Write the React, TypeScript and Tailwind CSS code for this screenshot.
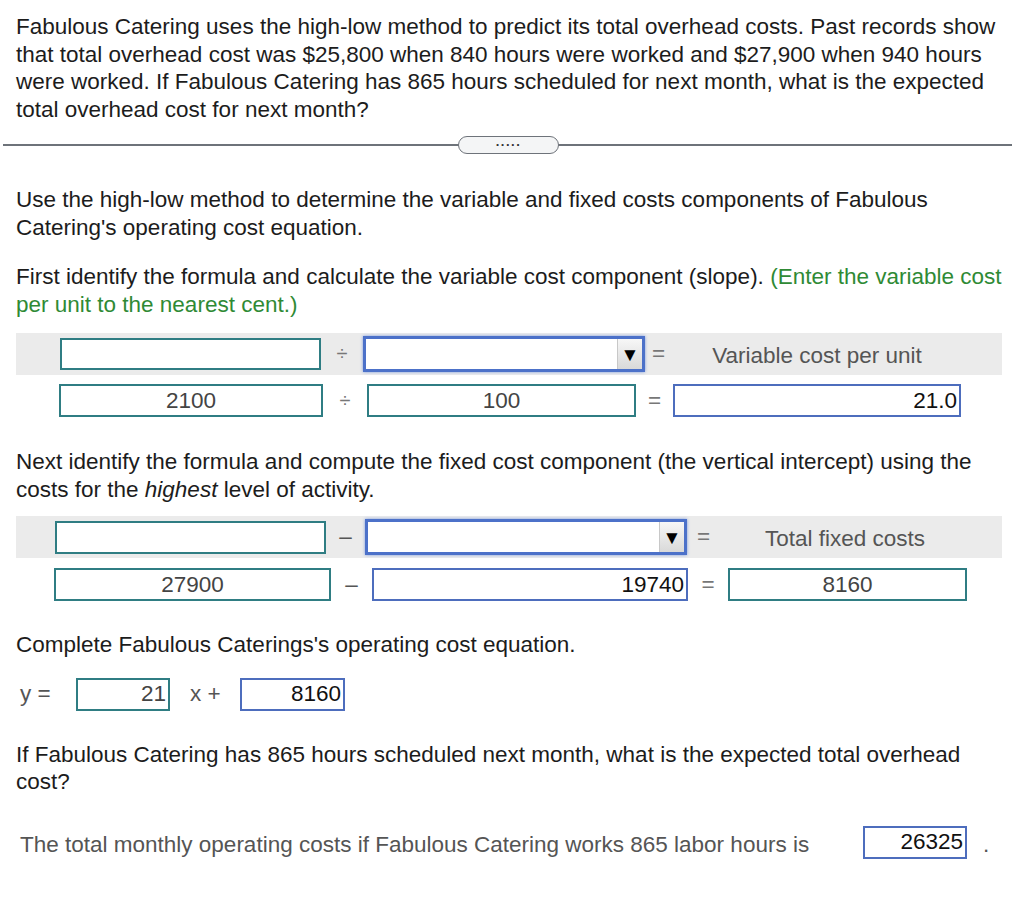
import React from "react";

const teal = "border-2 border-[#2f7d83]";
const blue = "border-2 border-[#4d6dbd]";

function Select({ w }: { w: string }) {
  return (
    <div className={`${w} h-[36px] flex border-[3px] border-[#4c71c9] shadow-[0_0_3px_#7d9be0] bg-white`}>
      <div className="flex-1" />
      <div className="w-[25px] flex items-center justify-center bg-gradient-to-b from-[#f7f7f7] to-[#d9d9d9] border-l border-[#c8c8c8] text-[19px] leading-none text-black">
        ▼
      </div>
    </div>
  );
}

export default function App() {
  return (
    <div
      className="w-[1024px] h-[907px] bg-white text-[#1c1c1c] text-[22.5px] leading-[27.5px] flex flex-col"
      style={{ fontFamily: '"Liberation Sans", Arial, sans-serif' }}
    >
      <p className="px-4 pt-[13px]">
        Fabulous Catering uses the high-low method to predict its total overhead costs. Past records show that total
        overhead cost was $25,800 when 840 hours were worked and $27,900 when 940 hours were worked. If Fabulous
        Catering has 865 hours scheduled for next month, what is the expected total overhead cost for next month?
      </p>

      <div className="relative mt-[12px] h-[20px] mx-[3px] w-[1009px] flex items-center">
        <div className="w-full h-[2px] bg-[#6e737a]" />
        <div className="absolute left-[455px] top-[1px] w-[101px] h-[18px] rounded-full border-[1.5px] border-[#6e737a] bg-[#f4f5f6] flex items-center justify-center">
          <span className="text-[13px] leading-none tracking-[1.5px] font-bold text-[#333] -mt-[7px]">.....</span>
        </div>
      </div>

      <p className="px-4 mt-[31px]">
        Use the high-low method to determine the variable and fixed costs components of Fabulous Catering's operating
        cost equation.
      </p>

      <p className="px-4 mt-[22px]">
        First identify the formula and calculate the variable cost component (slope).{" "}
        <span className="text-[#2f8a35]">(Enter the variable cost per unit to the nearest cent.)</span>
      </p>

      {/* Table 1 */}
      <div className="mt-[15px] ml-4 w-[986px]">
        <div className="h-[42px] bg-[#ebebeb] flex items-center pl-[44px]">
          <div className={`w-[261px] h-[32px] bg-white ${teal}`} />
          <div className="w-[42px] text-center text-[#777] text-[20px]">÷</div>
          <Select w="w-[282px]" />
          <div className="w-[27px] text-center text-[#777]">=</div>
          <div className="w-[290px] text-center text-[#555] pt-[3px]">Variable cost per unit</div>
        </div>
        <div className="mt-[9px] h-[33px] flex items-center pl-[43px]">
          <div className={`w-[264px] h-[33px] ${teal} flex items-center justify-center text-[#444]`}>2100</div>
          <div className="w-[44px] text-center text-[#777] text-[20px]">÷</div>
          <div className={`w-[269px] h-[33px] ${teal} flex items-center justify-center text-[#444]`}>100</div>
          <div className="w-[37px] text-center text-[#777]">=</div>
          <div className={`w-[288px] h-[33px] ${blue} flex items-center justify-end pr-[2px] text-[#111]`}>21.0</div>
        </div>
      </div>

      <p className="px-4 mt-[31px]">
        Next identify the formula and compute the fixed cost component (the vertical intercept) using the costs for the{" "}
        <i>highest</i> level of activity.
      </p>

      {/* Table 2 */}
      <div className="mt-[13px] ml-4 w-[986px]">
        <div className="h-[42px] bg-[#ebebeb] flex items-center pl-[39px]">
          <div className={`w-[271px] h-[33px] bg-white ${teal}`} />
          <div className="w-[39px] text-center text-[#555]">–</div>
          <Select w="w-[322px]" />
          <div className="w-[33px] text-center text-[#777]">=</div>
          <div className="w-[250px] text-center text-[#555] pt-[3px]">Total fixed costs</div>
        </div>
        <div className="mt-[10px] h-[33px] flex items-center pl-[38px]">
          <div className={`w-[277px] h-[33px] ${teal} flex items-center justify-center text-[#444]`}>27900</div>
          <div className="w-[41px] text-center text-[#555]">–</div>
          <div className={`w-[316px] h-[33px] ${blue} flex items-center justify-end pr-[2px] text-[#111]`}>19740</div>
          <div className="w-[40px] text-center text-[#777]">=</div>
          <div className={`w-[239px] h-[33px] ${teal} flex items-center justify-center text-[#444]`}>8160</div>
        </div>
      </div>

      <p className="px-4 mt-[30px]">Complete Fabulous Caterings's operating cost equation.</p>

      <div className="mt-[19px] h-[33px] flex items-center pl-[20px]">
        <span className="w-[56px] text-[#555]">y =</span>
        <div className={`w-[94px] h-[33px] ${teal} flex items-center justify-end pr-[2px] text-[#444]`}>21</div>
        <span className="w-[70px] pl-[20px] text-[#555]">x +</span>
        <div className={`w-[105px] h-[33px] ${blue} flex items-center justify-end pr-[2px] text-[#111]`}>8160</div>
      </div>

      <p className="px-4 mt-[30px]">
        If Fabulous Catering has 865 hours scheduled next month, what is the expected total overhead cost?
      </p>

      <div className="mt-[30px] h-[33px] flex items-center pl-[20px]">
        <span className="w-[843px] text-[#555] pt-[6px]">The total monthly operating costs if Fabulous Catering works 865 labor hours is</span>
        <div className={`w-[104px] h-[33px] ${blue} flex items-center justify-end pr-[2px] text-[#111]`}>26325</div>
        <span className="ml-[16px] text-[#555] pt-[6px]">.</span>
      </div>
    </div>
  );
}
